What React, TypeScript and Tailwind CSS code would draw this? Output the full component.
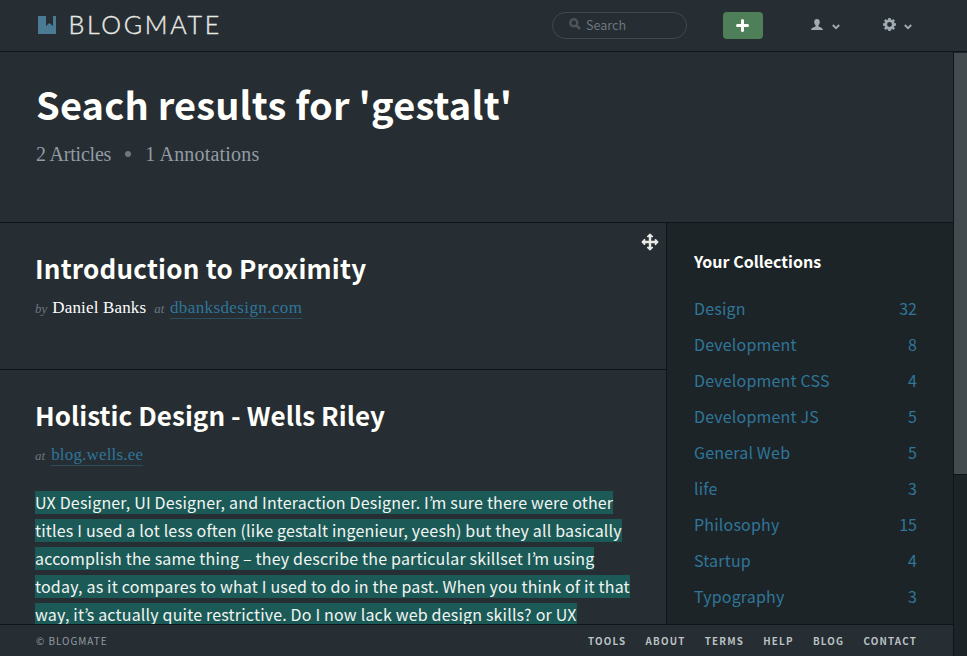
import React from "react";

const sans = "font-['Noto_Sans_CJK_KR',sans-serif]";
const serif = "font-['Liberation_Serif',serif]";

const collections: [string, number][] = [
  ["Design", 32],
  ["Development", 8],
  ["Development CSS", 4],
  ["Development JS", 5],
  ["General Web", 5],
  ["life", 3],
  ["Philosophy", 15],
  ["Startup", 4],
  ["Typography", 3],
];

const lines = [
  "UX Designer, UI Designer, and Interaction Designer. I’m sure there were other",
  "titles I used a lot less often (like gestalt ingenieur, yeesh) but they all basically",
  "accomplish the same thing – they describe the particular skillset I’m using",
  "today, as it compares to what I used to do in the past. When you think of it that",
  "way, it’s actually quite restrictive. Do I now lack web design skills? or UX",
];

const link =
  "text-[#2f7699] underline decoration-[#2b4c5e] decoration-1 underline-offset-[5px] [text-decoration-skip-ink:none]";

function Chevron() {
  return (
    <svg width="8" height="6" viewBox="0 0 8 6" fill="none" stroke="#a0abb2" strokeWidth="1.9">
      <path d="M0.8 1L4 4.2L7.2 1" />
    </svg>
  );
}

// Tightens the apostrophe, which is set too loosely in this face.
function Highlight({ text }: { text: string }) {
  const [head, tail] = text.split("’");
  return (
    <span className="bg-[linear-gradient(#1c5a57,#1c5a57)] bg-[position:0_1px] bg-no-repeat">
      {head}
      {tail !== undefined && <span className="tracking-[-1.900px]">’</span>}
      {tail}
    </span>
  );
}

function Header() {
  return (
    <header className="flex h-[52px] shrink-0 items-start border-b border-[#0f161b] bg-[#262d33]">
      <svg className="ml-[38px] mt-4" width="18" height="18" viewBox="0 0 18 18">
        <path d="M0 0H8V10L11.5 7L15 10V0H18V18H0Z" fill="#4b7b94" />
      </svg>
      <div className="ml-[12.500px] mt-[10px] w-[170px] whitespace-nowrap font-['Lato',sans-serif] text-[25px] font-light leading-[29px] tracking-[2.7px] text-[#e8e9e4] [-webkit-text-stroke:0.4px_#e8e9e4]">
        BLOGMATE
      </div>
      <div className="ml-auto mr-9 mt-3 flex h-[27px] w-[135px] items-center rounded-full border border-[#434a4d] pl-4">
        <svg className="-mt-[3px]" width="12" height="12" viewBox="0 0 12 12" fill="none" stroke="#4c5457">
          <circle cx="4.8" cy="4.8" r="3.5" strokeWidth="2.5" />
          <path d="M7.5 7.5L11 11" strokeWidth="2.8" />
        </svg>
        <span className="-mt-[2px] ml-[5px] text-[12.6px] leading-[20px] text-[#6c777f]">Search</span>
      </div>
      <div className="mt-3 flex h-[27px] w-10 items-center justify-center rounded-[4px] bg-[#4f7f59]">
        <svg className="-ml-px" width="13" height="13" viewBox="0 0 13 13" stroke="#fff" strokeWidth="3" strokeLinecap="round">
          <path d="M6.5 1.5V11.5M1.5 6.5H11.5" />
        </svg>
      </div>
      <svg className="ml-12 mt-[19px]" width="12" height="11" viewBox="0 0 12 11" fill="#a0abb2">
        <path d="M6 0C4.2 0 3.2 1.1 3.2 3C3.2 4.500 3.900 5.600 4.600 6.300V7.200C4.500 8 0 8.300 0 11H12C12 8.300 7.500 8 7.400 7.200V6.300C8.100 5.600 8.800 4.500 8.800 3C8.800 1.100 7.800 0 6 0Z" />
      </svg>
      <div className="ml-[9px] mt-[24px]"><Chevron /></div>
      <svg className="ml-[43px] mt-[18px]" width="13" height="13" viewBox="0 0 13 13" fill="none" stroke="#a0abb2">
        <circle cx="6.5" cy="6.5" r="3.8" strokeWidth="2.700" />
        <path d="M6.500 0V2M6.500 11V13M0 6.500H2M11 6.500H13M1.900 1.900L3.300 3.300M9.700 9.700L11.100 11.100M1.900 11.100L3.300 9.700M9.700 3.300L11.100 1.900" strokeWidth="2.600" />
      </svg>
      <div className="ml-[8px] mr-[55px] mt-[24px]"><Chevron /></div>
    </header>
  );
}

function Footer() {
  return (
    <footer className="flex h-8 shrink-0 items-start justify-between border-t border-[#0f161b] bg-[#262d33] pl-9 pr-9 pt-[6px] leading-5">
      <span className="text-[10px] tracking-[0.950px] text-[#929ca3]">© BLOGMATE</span>
      <nav className="flex gap-[19.200px] text-[9.8px] font-bold tracking-[1.2px] text-[#bcc2c5]">
        {["TOOLS", "ABOUT", "TERMS", "HELP", "BLOG", "CONTACT"].map((t) => (
          <span key={t}>{t}</span>
        ))}
      </nav>
    </footer>
  );
}

export default function App() {
  return (
    <div className={`${sans} flex h-[656px] w-[967px] flex-col overflow-hidden bg-[#262d33] text-white`}>
      <Header />
      <div className="flex min-h-0 flex-1">
        <div className="flex w-[953px] flex-col">
          <section className="h-[171px] shrink-0 border-b border-[#0f161b] pl-9 pt-[24px]">
            <h1 className="whitespace-nowrap text-[38px] font-bold leading-[56px] tracking-[0.170px] text-[#fffffb]">Seach results for 'gestalt'</h1>
            <p className={`${serif} mt-[10px] flex items-center whitespace-nowrap text-[20px] leading-6 text-[#929ca3]`}>
              <span className="tracking-[-0.200px]">2 Articles</span>
              <span className="ml-[14px] mr-[14px] size-[6px] rounded-full bg-[#6c777f]" />
              <span className="tracking-[0.200px]">1 Annotations</span>
            </p>
          </section>
          <div className="flex min-h-0 flex-1">
            <main className="w-[666px] shrink-0 overflow-hidden">
              <article className="flex h-[147px] justify-between border-b border-[#0f161b] pl-[35px] pr-[7px]">
                <div className="pt-[25px]">
                  <h2 className="whitespace-nowrap text-[26px] font-bold leading-[40px] tracking-[0.220px] text-[#fffffb]">Introduction to Proximity</h2>
                  <p className={`${serif} mt-[9px] flex items-baseline whitespace-nowrap text-[17px] leading-[22px]`}>
                    <i className="mr-[5px] text-[13px] text-[#6c777f]">by</i>
                    <span className="tracking-[0.160px]">Daniel Banks</span>
                    <i className="ml-[8px] mr-[5.500px] text-[13px] text-[#6c777f]">at</i>
                    <span className={`${link} tracking-[0.400px]`}>dbanksdesign.com</span>
                  </p>
                </div>
                <svg className="mt-[10px]" width="18" height="18" viewBox="0 0 18 18" fill="#e8e9e4" stroke="#e8e9e4" strokeLinejoin="round">
                  <path d="M9 3V15M3 9H15" fill="none" strokeWidth="2.400" />
                  <path d="M9 1.200L11.400 3.600H6.600ZM9 16.800L6.600 14.400H11.400ZM1.200 9L3.600 6.600V11.400ZM16.800 9L14.400 11.400V6.600Z" strokeWidth="1.400" />
                </svg>
              </article>
              <article className="pl-[35px] pt-[25px]">
                <h2 className="whitespace-nowrap text-[26px] font-bold leading-[40px] tracking-[0.050px] text-[#fffffb]">Holistic Design - Wells Riley</h2>
                <p className={`${serif} mt-[9px] flex items-baseline whitespace-nowrap text-[17px] leading-[22px]`}>
                  <i className="mr-[6px] text-[13px] text-[#6c777f]">at</i>
                  <span className={`${link} tracking-[0.180px]`}>blog.wells.ee</span>
                </p>
                <p className="mt-[21px] whitespace-nowrap text-[16px] leading-7 tracking-[0.185px] text-[#f2f5f2]">
                  {lines.map((l) => (
                    <React.Fragment key={l}>
                      <Highlight text={l} />
                      <br />
                    </React.Fragment>
                  ))}
                </p>
              </article>
            </main>
            <aside className="flex-1 overflow-hidden border-l border-[#0f161b] bg-[#1d2428] pl-[27px] pr-9 pt-[26px]">
              <h3 className="text-[16px] font-bold leading-6 text-[#fffffb]">Your Collections</h3>
              <ul className="mt-[17px] text-[16px] leading-9 text-[#2f7699]">
                {collections.map(([name, n]) => (
                  <li key={name} className="flex justify-between">
                    <span className="tracking-[0.180px]">{name}</span>
                    <span>{n}</span>
                  </li>
                ))}
              </ul>
            </aside>
          </div>
          <Footer />
        </div>
        <div className="w-[14px] border-l border-[#0f161b] bg-[#1d2428] pt-px">
          <div className="h-[422px] border-b border-[#0f161b] bg-[#434b4e]" />
        </div>
      </div>
    </div>
  );
}
